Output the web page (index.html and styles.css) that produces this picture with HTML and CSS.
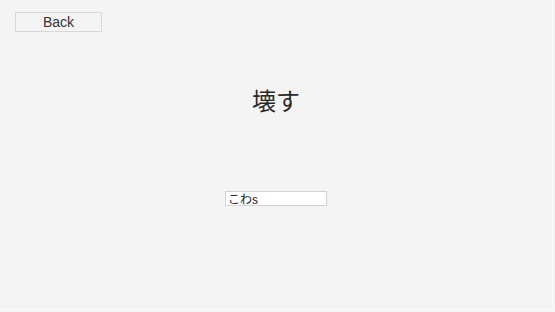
FILE: index.html
```html
<!DOCTYPE html>
<html lang="ja">
<head>
    <meta charset="UTF-8">
    <title>壊す</title>
    <link rel="stylesheet" href="styles.css">
</head>
<body>
    <div class="screen">
        <div class="top-bar">
            <button class="back-btn">Back</button>
        </div>
        <div class="word">壊す</div>
        <div class="answer-row">
            <input class="answer" type="text" value="こわs">
        </div>
    </div>
</body>
</html>
```

FILE: styles.css
```css
html, body {
    margin: 0;
    height: 100%;
}
body {
    background: #f4f4f4;
    font-family: "Liberation Sans", "Noto Sans CJK JP", Arial, sans-serif;
    color: #222;
}
.screen {
    height: 309px;
    width: 552px;
    border-right: 1px solid #fbfbfb;
    border-bottom: 1px solid #fbfbfb;
}
.top-bar {
    padding: 12px 0 0 15px;
}
.back-btn {
    width: 87px;
    height: 20px;
    padding: 0;
    background: #f4f4f4;
    border: 1px solid #d8d8d8;
    border-radius: 0;
    font-family: "Liberation Sans", Arial, sans-serif;
    font-size: 14px;
    color: #333;
}
.word {
    margin-top: 56px;
    text-align: center;
    font-size: 24px;
    line-height: 28px;
    color: #2a2a2a;
}
.answer-row {
    margin-top: 74px;
    text-align: center;
}
.answer {
    width: 97px;
    height: 13px;
    padding: 0 1px 0 2px;
    border: 1px solid #d4d4d4;
    background: #fff;
    font-family: "Liberation Sans", "Noto Sans CJK JP", sans-serif;
    font-size: 12px;
    color: #222;
    outline: none;
}
```
